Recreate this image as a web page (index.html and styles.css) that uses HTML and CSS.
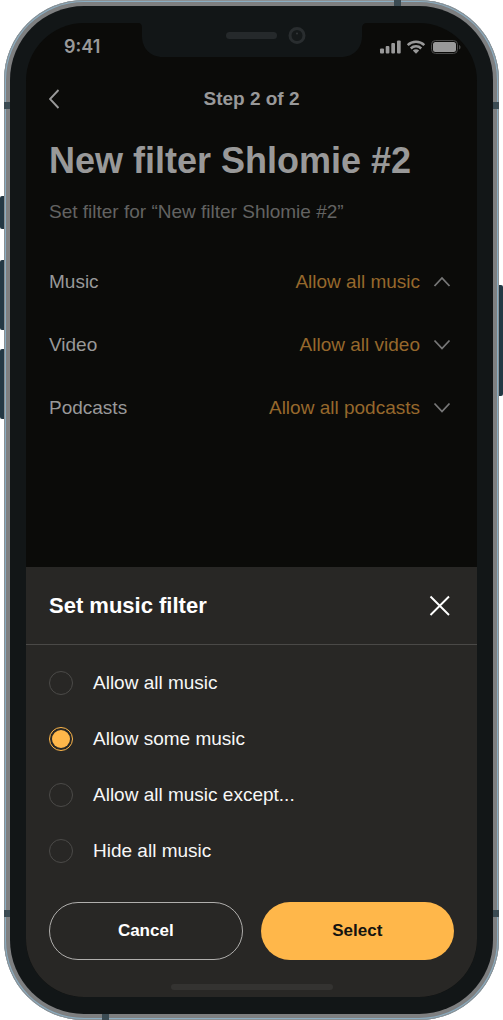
FILE: index.html
```html
<!DOCTYPE html>
<html lang="en">
<head>
<meta charset="utf-8">
<meta name="viewport" content="width=device-width, initial-scale=1">
<title>Set music filter</title>
<link rel="stylesheet" href="styles.css">
</head>
<body>
<div class="stage">
  <span class="key key-mute"></span>
  <span class="key key-up"></span>
  <span class="key key-down"></span>
  <span class="key key-power"></span>
  <div class="frame">
    <span class="band band-left-top"></span>
    <span class="band band-right-top"></span>
    <span class="band band-left-bottom"></span>
    <span class="band band-right-bottom"></span>
    <span class="band band-top"></span>
    <span class="band band-bottom"></span>
    <div class="bezel">
      <div class="screen">
        <svg class="notch" viewBox="0 0 228 34" aria-hidden="true">
          <path d="M0 0C3 0 4 2 4 5v8c0 12 8 21 21 21h178c13 0 21-9 21-21V5c0-3 2-5 5-5z" fill="#121617"/>
          <rect x="88" y="9" width="51" height="7" rx="3.5" fill="#25292b"/>
          <circle cx="159" cy="12.500" r="7" fill="#15191a" stroke="#292d2f" stroke-width="3"/>
          <circle cx="159" cy="10.500" r="1" fill="#34383a"/>
        </svg>
        <div class="status">
          <span class="time">9:41</span>
          <svg class="status-icons" width="82" height="16" viewBox="0 0 82 16" aria-hidden="true">
            <g fill="#999">
              <rect x="1" y="9.500" width="4" height="5" rx="1"/>
              <rect x="6.700" y="7" width="3.700" height="7.500" rx="1"/>
              <rect x="12.300" y="4" width="3.700" height="10.500" rx="1"/>
              <rect x="18" y="1.500" width="3.700" height="13" rx="1"/>
              <path d="M37 14.800l-3.200-3.200a4.600 4.600 0 0 1 6.400 0z"/>
            </g>
            <g fill="none" stroke="#999" stroke-width="2.500">
              <path d="M28.700 6.200A11.900 11.900 0 0 1 45.300 6.200"/>
              <path d="M31.800 9.500a7.400 7.400 0 0 1 10.400 0"/>
            </g>
            <rect x="52.500" y="1.500" width="26" height="13" rx="4" fill="none" stroke="#4a4a49"/>
            <rect x="54" y="3" width="23" height="10" rx="2.500" fill="#999"/>
            <path d="M80 6v4.500c1.300-.6 1.500-1.400 1.500-2.300S81.300 6.600 80 6z" fill="#4a4a49"/>
          </svg>
        </div>
        <main class="page">
          <header class="nav">
            <button class="icon-button" type="button" aria-label="Back">
              <svg width="12" height="20" viewBox="0 0 12 20"><path d="M9.500 1L1 10l8.500 9" fill="none" stroke="#999" stroke-width="1.900"/></svg>
            </button>
            <p class="step">Step 2 of 2</p>
          </header>
          <h1 class="title">New filter Shlomie #2</h1>
          <p class="subtitle">Set filter for “New filter Shlomie #2”</p>
          <ul class="filters">
            <li class="filter">
              <span id="f-music">Music</span>
              <button class="filter-value" id="v-music" type="button" aria-expanded="true" aria-labelledby="f-music v-music">Allow all music
                <svg width="24" height="16" viewBox="0 0 24 16" aria-hidden="true"><path d="M4.500 12l7.500-8 7.500 8" /></svg></button>
            </li>
            <li class="filter">
              <span id="f-video">Video</span>
              <button class="filter-value" id="v-video" type="button" aria-expanded="false" aria-labelledby="f-video v-video">Allow all video
                <svg width="24" height="16" viewBox="0 0 24 16" aria-hidden="true"><path d="M4.500 3.500l7.500 8 7.500-8" /></svg></button>
            </li>
            <li class="filter">
              <span id="f-podcasts">Podcasts</span>
              <button class="filter-value" id="v-podcasts" type="button" aria-expanded="false" aria-labelledby="f-podcasts v-podcasts">Allow all podcasts
                <svg width="24" height="16" viewBox="0 0 24 16" aria-hidden="true"><path d="M4.500 3.500l7.500 8 7.500-8" /></svg></button>
            </li>
          </ul>
        </main>
        <form class="sheet" role="dialog" aria-labelledby="sheet-title">
          <header class="sheet-head">
            <h2 class="sheet-title" id="sheet-title">Set music filter</h2>
            <button class="icon-button" type="button" aria-label="Close">
              <svg width="28" height="28" viewBox="0 0 28 28"><path d="M4.500 4.500l18.500 18.500M23 4.500L4.500 23" fill="none" stroke="#fff" stroke-width="1.900"/></svg>
            </button>
          </header>
          <div class="options">
            <label class="option"><input class="radio" type="radio" name="music" value="all">Allow all music</label>
            <label class="option"><input class="radio" type="radio" name="music" value="some" checked>Allow some music</label>
            <label class="option"><input class="radio" type="radio" name="music" value="except">Allow all music except...</label>
            <label class="option"><input class="radio" type="radio" name="music" value="none">Hide all music</label>
          </div>
          <div class="actions">
            <button class="button button-outline" type="button">Cancel</button>
            <button class="button button-solid" type="submit">Select</button>
          </div>
          <div class="home-bar"></div>
        </form>
      </div>
    </div>
  </div>
</div>
</body>
</html>
```
FILE: styles.css
```css
* { box-sizing: border-box; }

body {
  margin: 0;
  background: #fff;
  font-family: "Liberation Sans", Arial, sans-serif;
  font-size: 19px;
  line-height: 24px;
}

h1, h2, p, ul { margin: 0; padding: 0; }

button {
  padding: 0;
  border: 0;
  background: none;
  font: inherit;
  color: inherit;
  cursor: pointer;
}

svg { display: block; }

/* Phone body */
.stage {
  position: relative;
  display: flex;
  min-height: 100vh;
  padding: 0 4px;
}

.frame {
  position: relative;
  display: flex;
  flex: 1;
  padding: 6px;
  border-radius: 80px;
  background: #7e7f80;
  box-shadow: inset 0 0 0 1px #8b9093, inset 0 0 0 2px #8aadc2;
}

.bezel {
  display: flex;
  flex: 1;
  padding: 17px 16px;
  border-radius: 74px;
  background: #121617;
}

.screen {
  position: relative;
  display: flex;
  flex: 1;
  flex-direction: column;
  overflow: hidden;
  border-radius: 58px;
  background: #0b0b09;
  color: #999;
}

.key {
  position: absolute;
  left: 0;
  width: 4px;
  border-radius: 2px 0 0 2px;
  background: #233844;
}
.key-mute { top: 196px; height: 33px; }
.key-up { top: 260px; height: 70px; }
.key-down { top: 349px; height: 70px; }
.key-power {
  top: 285px;
  right: 0;
  left: auto;
  height: 111px;
  border-radius: 0 2px 2px 0;
}

.band {
  position: absolute;
  width: 6px;
  height: 7px;
  background: #3b4b53;
}
.band-left-top { top: 102px; left: 0; }
.band-right-top { top: 102px; right: 0; }
.band-left-bottom { bottom: 103px; left: 0; }
.band-right-bottom { right: 0; bottom: 103px; }
.band-top { top: 0; right: 98px; width: 7px; height: 6px; }
.band-bottom { bottom: 0; left: 98px; width: 7px; height: 6px; }

.notch {
  position: absolute;
  top: 0;
  left: 50%;
  width: 228px;
  height: 34px;
  margin-left: -114px;
}

/* Status bar */
.status {
  display: flex;
  align-items: center;
  justify-content: space-between;
  height: 48px;
  padding: 0 16px 0 38px;
}

.time {
  font-family: Inter, sans-serif;
  font-size: 18px;
  font-weight: 600;
}

/* Page under the sheet */
.page {
  flex: 1;
  padding: 0 23px;
}

.nav {
  display: grid;
  grid-template-columns: 28px 1fr 28px;
  align-items: center;
  height: 56px;
}

.step {
  font-weight: 700;
  text-align: center;
}

.title {
  margin-top: 12px;
  font-size: 36px;
  line-height: 44px;
}

.subtitle {
  margin-top: 17px;
  color: #636362;
}

.filters {
  margin-top: 26px;
  list-style: none;
}

.filter {
  display: flex;
  align-items: center;
  justify-content: space-between;
  height: 63px;
}

.filter-value {
  display: flex;
  align-items: center;
  gap: 10px;
  color: #96682c;
}

.filter-value path {
  fill: none;
  stroke: #777;
  stroke-width: 1.8;
}

/* Bottom sheet */
.sheet {
  background: #282725;
  color: #f7f7f7;
}

.sheet-head {
  display: flex;
  align-items: center;
  justify-content: space-between;
  height: 78px;
  padding: 0 23px;
  border-bottom: 1px solid #4a4947;
}

.sheet-title {
  color: #fff;
  font-size: 22px;
  line-height: 28px;
}

.options { padding: 10px 23px 0; }

.option {
  display: flex;
  align-items: center;
  gap: 20px;
  height: 56px;
}

.radio {
  width: 24px;
  height: 24px;
  margin: 0;
  border: 1px solid #4b4a48;
  border-radius: 50%;
  appearance: none;
}

.radio:checked {
  border-color: #ffb74a;
  background: #ffb74a;
  background-clip: content-box;
  padding: 2px;
}

.actions {
  display: grid;
  grid-template-columns: 1fr 1fr;
  gap: 18px;
  padding: 23px 23px 24px;
}

.button {
  height: 58px;
  border-radius: 29px;
  font-size: 17px;
  font-weight: 700;
}

.button-outline {
  border: 1px solid #b0afad;
  color: #fff;
}

.button-solid {
  background: #ffb74a;
  color: #141310;
}

.home-bar {
  width: 162px;
  height: 6px;
  margin: 0 auto 7px;
  border-radius: 3px;
  background: #343331;
}
```
